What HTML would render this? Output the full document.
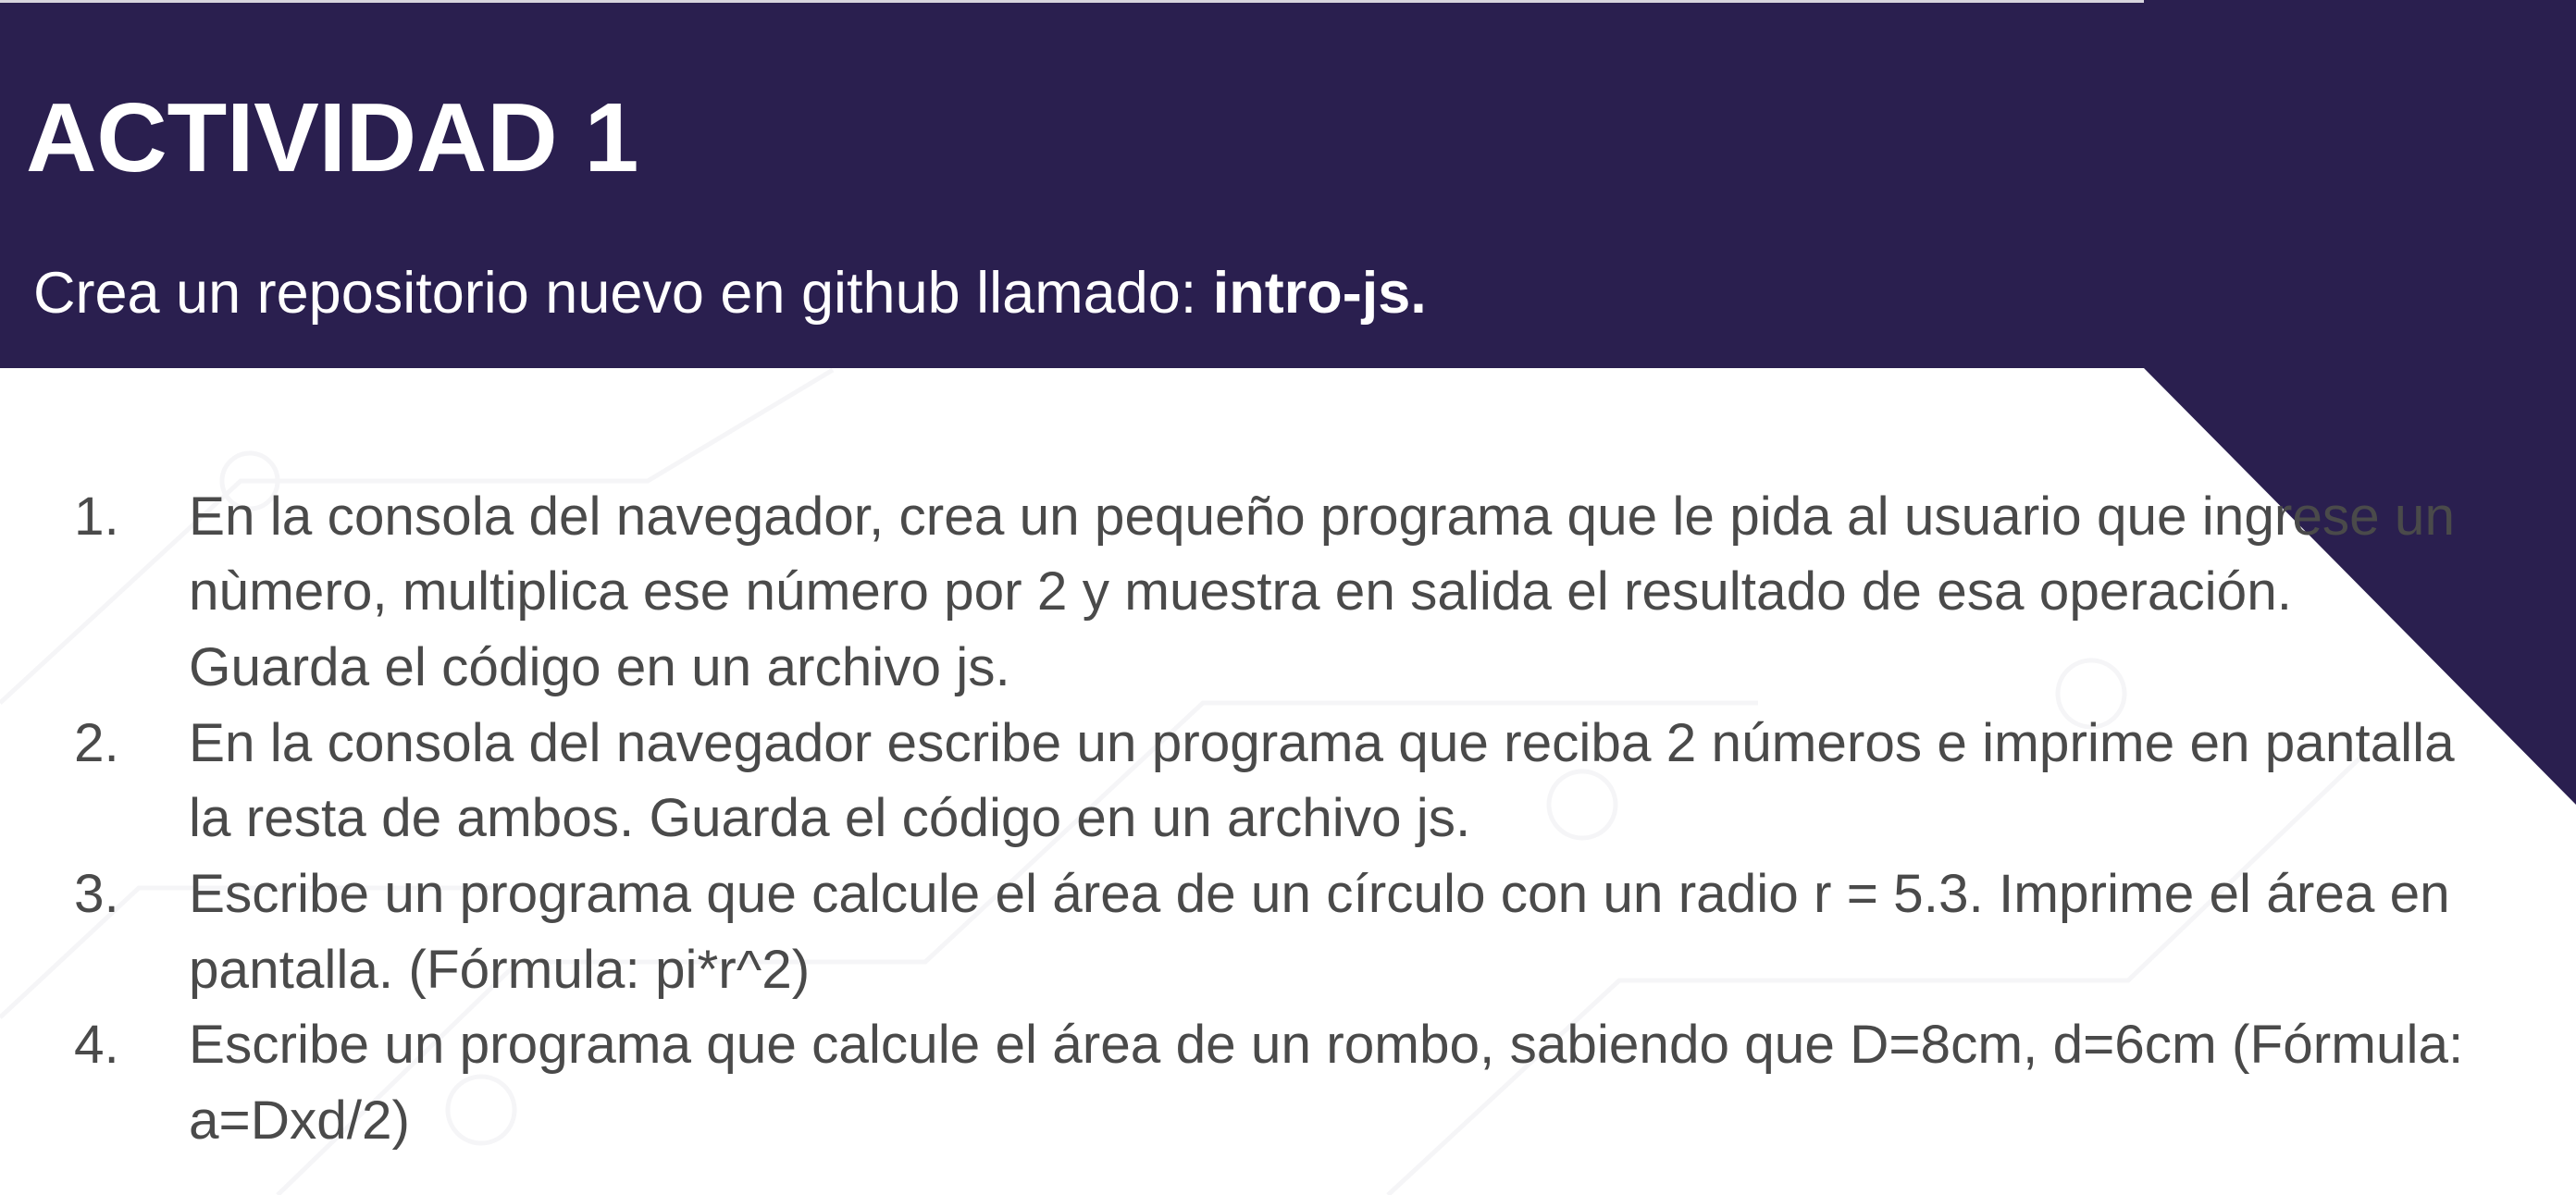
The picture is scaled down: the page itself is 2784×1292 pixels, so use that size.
<!DOCTYPE html>
<html><head><meta charset="utf-8"><style>
html,body{margin:0;padding:0}
body{width:2784px;height:1292px;position:relative;overflow:hidden;background:#fff;font-family:"Liberation Sans",sans-serif}
svg{position:absolute;left:0;top:0}
.t{position:absolute;white-space:nowrap}
.title{left:28px;top:96px;font-size:106px;font-weight:bold;color:#fff;letter-spacing:-0.3px;line-height:1}
.sub{left:36px;top:286px;font-size:63px;color:#fff;line-height:1}
.l{position:absolute;font-size:58.5px;color:#4a4a4a;white-space:nowrap;line-height:1}
.n{left:80px}.x{left:204px}
</style></head><body>
<svg width="2784" height="1292">
<g stroke="#f5f5f7" stroke-width="5" fill="none">
<path d="M0 760 L260 520 L700 520 L900 400"/><path d="M300 1292 L560 1040 L1000 1040 L1300 760 L1900 760"/>
<path d="M1500 1292 L1750 1060 L2300 1060 L2550 820"/><path d="M0 1100 L150 960 L550 960"/>
<circle cx="1710" cy="870" r="36"/><circle cx="2260" cy="750" r="36"/><circle cx="520" cy="1200" r="36"/><circle cx="270" cy="520" r="30"/>
</g>
<polygon points="0,0 2784,0 2784,870 2317,398 0,398" fill="#2a1f4f"/>
<rect x="0" y="0" width="2317" height="3" fill="#d8d6de"/>
</svg>
<div class="t title">ACTIVIDAD 1</div>
<div class="t sub">Crea un repositorio nuevo en github llamado: <b>intro-js.</b></div>
<div class="l n" style="top:530px">1.</div>
<div class="l x" style="top:530px">En la consola del navegador, crea un pequeño programa que le pida al usuario que ingrese un</div>
<div class="l x" style="top:611px">nùmero, multiplica ese número por 2 y muestra en salida el resultado de esa operación.</div>
<div class="l x" style="top:693px">Guarda el código en un archivo js.</div>
<div class="l n" style="top:775px">2.</div>
<div class="l x" style="top:775px">En la consola del navegador escribe un programa que reciba 2 números e imprime en pantalla</div>
<div class="l x" style="top:856px">la resta de ambos. Guarda el código en un archivo js.</div>
<div class="l n" style="top:938px">3.</div>
<div class="l x" style="top:938px">Escribe un programa que calcule el área de un círculo con un radio r = 5.3. Imprime el área en</div>
<div class="l x" style="top:1020px">pantalla. (Fórmula: pi*r^2)</div>
<div class="l n" style="top:1101px">4.</div>
<div class="l x" style="top:1101px">Escribe un programa que calcule el área de un rombo, sabiendo que D=8cm, d=6cm (Fórmula:</div>
<div class="l x" style="top:1183px">a=Dxd/2)</div>
</body></html>
